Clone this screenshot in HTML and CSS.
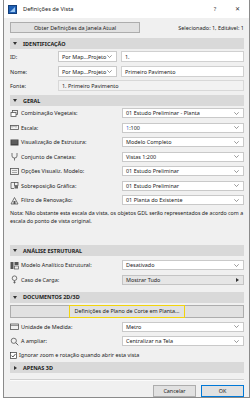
FILE: index.html
```html
<!DOCTYPE html>
<html lang="pt">
<head>
<meta charset="utf-8">
<link rel="stylesheet" href="styles.css">
</head>
<body>
<div class="window">
  <div class="titlebar">
    <svg class="appicon" width="9" height="9" viewBox="0 0 9 9"><rect x="0.5" y="0.5" width="8" height="8" fill="#1e5fb4" stroke="#123e7a"/><path d="M2 7 L7 2 L7 7 Z" fill="#9cc8f2"/></svg>
    <span class="title">Definições de Vista</span>
    <span class="tb-btn">?</span>
    <span class="tb-btn close">✕</span>
  </div>
  <div class="content">
    <div class="toprow">
      <div class="btn getbtn">Obter Definições da Janela Atual</div>
      <span class="selinfo">Selecionado: 1, Editável: 1</span>
    </div>

    <div class="section s-ident"><svg class="tri" width="4" height="3" viewBox="0 0 4 3"><path d="M0 0H4L2 3Z" fill="#333"/></svg>IDENTIFICAÇÃO</div>
    <div class="irow r-id">
      <span class="ilbl">ID:</span>
      <span class="sel small">Por Map...Projeto<svg class="chev" width="5" height="3" viewBox="0 0 5 3"><path d="M0.3 0.3L2.5 2.5L4.7 0.3" fill="none" stroke="#555" stroke-width="0.6"/></svg></span>
      <span class="field">1.</span>
    </div>
    <div class="irow r-nome">
      <span class="ilbl">Nome:</span>
      <span class="sel small">Por Map...Projeto<svg class="chev" width="5" height="3" viewBox="0 0 5 3"><path d="M0.3 0.3L2.5 2.5L4.7 0.3" fill="none" stroke="#555" stroke-width="0.6"/></svg></span>
      <span class="field">Primeiro Pavimento</span>
    </div>
    <div class="irow r-fonte">
      <span class="ilbl">Fonte:</span>
      <span class="field ro">1. Primeiro Pavimento</span>
    </div>

    <div class="section s-geral"><svg class="tri" width="4" height="3" viewBox="0 0 4 3"><path d="M0 0H4L2 3Z" fill="#333"/></svg>GERAL</div>
    <div class="grow first">
      <svg class="ico" viewBox="0 0 9 9"><rect x="2.5" y="1.5" width="5" height="4" fill="none" stroke="#555" stroke-width="0.8"/><rect x="1" y="3.5" width="5" height="4" fill="#fff" stroke="#555" stroke-width="0.8"/></svg>
      <span class="glbl">Combinação Vegetais:</span>
      <span class="sel wide">01 Estudo Preliminar - Planta<svg class="chev" width="5" height="3" viewBox="0 0 5 3"><path d="M0.3 0.3L2.5 2.5L4.7 0.3" fill="none" stroke="#555" stroke-width="0.6"/></svg></span>
    </div>
    <div class="grow">
      <svg class="ico" viewBox="0 0 9 9"><rect x="0.5" y="2.5" width="8" height="4" fill="none" stroke="#555" stroke-width="0.8"/><path d="M2 2.5V4.5M4 2.5V4M6 2.5V4.5" stroke="#555" stroke-width="0.6"/></svg>
      <span class="glbl">Escala:</span>
      <span class="sel wide"><span class="blue">1</span>:100<svg class="chev" width="5" height="3" viewBox="0 0 5 3"><path d="M0.3 0.3L2.5 2.5L4.7 0.3" fill="none" stroke="#555" stroke-width="0.6"/></svg></span>
    </div>
    <div class="grow">
      <svg class="ico" viewBox="0 0 9 9"><rect x="0.5" y="1.5" width="8" height="6" fill="#444"/><path d="M1.5 3H7.5M1.5 5H7.5" stroke="#999" stroke-width="0.6"/></svg>
      <span class="glbl">Visualização de Estrutura:</span>
      <span class="sel wide">Modelo Completo<svg class="chev" width="5" height="3" viewBox="0 0 5 3"><path d="M0.3 0.3L2.5 2.5L4.7 0.3" fill="none" stroke="#555" stroke-width="0.6"/></svg></span>
    </div>
    <div class="grow">
      <svg class="ico" viewBox="0 0 9 9"><path d="M2 1V4Q2 6 4.5 6Q7 6 7 4V1M4.5 6V8.5" fill="none" stroke="#555" stroke-width="0.8"/></svg>
      <span class="glbl">Conjunto de Canetas:</span>
      <span class="sel wide">Vistas 1:200<svg class="chev" width="5" height="3" viewBox="0 0 5 3"><path d="M0.3 0.3L2.5 2.5L4.7 0.3" fill="none" stroke="#555" stroke-width="0.6"/></svg></span>
    </div>
    <div class="grow">
      <svg class="ico" viewBox="0 0 9 9"><rect x="0.5" y="1.5" width="8" height="6" fill="none" stroke="#555" stroke-width="0.8"/><path d="M2 3.5H7M2 5.5H7" stroke="#777" stroke-width="0.6"/></svg>
      <span class="glbl">Opções Visualiz. Modelo:</span>
      <span class="sel wide">01 Estudo Preliminar<svg class="chev" width="5" height="3" viewBox="0 0 5 3"><path d="M0.3 0.3L2.5 2.5L4.7 0.3" fill="none" stroke="#555" stroke-width="0.6"/></svg></span>
    </div>
    <div class="grow">
      <svg class="ico" viewBox="0 0 9 9"><path d="M4 1.5H1V7.5H4" fill="none" stroke="#555" stroke-width="0.8"/><rect x="4.5" y="1.5" width="3.5" height="3" fill="none" stroke="#555" stroke-width="0.8"/><rect x="4.5" y="5" width="3.5" height="2.5" fill="#666"/></svg>
      <span class="glbl">Sobreposição Gráfica:</span>
      <span class="sel wide">01 Estudo Preliminar<svg class="chev" width="5" height="3" viewBox="0 0 5 3"><path d="M0.3 0.3L2.5 2.5L4.7 0.3" fill="none" stroke="#555" stroke-width="0.6"/></svg></span>
    </div>
    <div class="grow">
      <svg class="ico" viewBox="0 0 9 9"><path d="M1 8L4.5 1.5L8 8Z" fill="none" stroke="#555" stroke-width="0.8"/><rect x="3.5" y="5" width="2" height="3" fill="#555"/></svg>
      <span class="glbl">Filtro de Renovação:</span>
      <span class="sel wide">01 Planta do Existente<svg class="chev" width="5" height="3" viewBox="0 0 5 3"><path d="M0.3 0.3L2.5 2.5L4.7 0.3" fill="none" stroke="#555" stroke-width="0.6"/></svg></span>
    </div>
    <p class="note">Nota: Não obstante esta escala da vista, os objetos GDL serão representados de acordo com a escala do ponto de vista original.</p>

    <div class="section s-anal"><svg class="tri" width="4" height="3" viewBox="0 0 4 3"><path d="M0 0H4L2 3Z" fill="#333"/></svg>ANÁLISE ESTRUTURAL</div>
    <div class="grow first2">
      <svg class="ico" viewBox="0 0 9 9"><rect x="0.5" y="1" width="3" height="7" fill="#555"/><rect x="4.5" y="1" width="4" height="3" fill="#555"/><rect x="4.5" y="5" width="4" height="3" fill="none" stroke="#555" stroke-width="0.7"/></svg>
      <span class="glbl">Modelo Analítico Estrutural:</span>
      <span class="sel wide">Desativado<svg class="chev" width="5" height="3" viewBox="0 0 5 3"><path d="M0.3 0.3L2.5 2.5L4.7 0.3" fill="none" stroke="#555" stroke-width="0.6"/></svg></span>
    </div>
    <div class="grow">
      <svg class="ico" viewBox="0 0 9 9"><circle cx="4.5" cy="3.2" r="2.3" fill="none" stroke="#555" stroke-width="0.8"/><path d="M4.5 5.5V8.5M3.3 7.3H5.7" stroke="#555" stroke-width="0.8"/></svg>
      <span class="glbl">Caso de Carga:</span>
      <span class="sel wide gray">Mostrar Tudo<svg class="arr" width="3" height="4" viewBox="0 0 3 4"><path d="M0 0L3 2L0 4Z" fill="#333"/></svg></span>
    </div>

    <div class="section s-doc"><svg class="tri" width="4" height="3" viewBox="0 0 4 3"><path d="M0 0H4L2 3Z" fill="#333"/></svg>DOCUMENTOS 2D/3D</div>
    <div class="btn cutbtn"><span class="hl">Definições de Plano de Corte em Planta...</span></div>
    <div class="grow first3">
      <svg class="ico" viewBox="0 0 9 9"><rect x="0.5" y="2" width="8" height="5.5" fill="none" stroke="#555" stroke-width="0.8"/><path d="M0.5 3.5H8.5" stroke="#555" stroke-width="0.6"/></svg>
      <span class="glbl">Unidade de Medida:</span>
      <span class="sel wide">Metro<svg class="chev" width="5" height="3" viewBox="0 0 5 3"><path d="M0.3 0.3L2.5 2.5L4.7 0.3" fill="none" stroke="#555" stroke-width="0.6"/></svg></span>
    </div>
    <div class="grow">
      <svg class="ico" viewBox="0 0 9 9"><circle cx="3.8" cy="3.8" r="2.6" fill="none" stroke="#555" stroke-width="0.8"/><path d="M5.7 5.7L8.3 8.3" stroke="#555" stroke-width="0.9"/></svg>
      <span class="glbl">A ampliar:</span>
      <span class="sel wide">Centralizar na Tela<svg class="chev" width="5" height="3" viewBox="0 0 5 3"><path d="M0.3 0.3L2.5 2.5L4.7 0.3" fill="none" stroke="#555" stroke-width="0.6"/></svg></span>
    </div>
    <div class="checkrow">
      <svg class="cb" width="7" height="7" viewBox="0 0 7 7"><rect x="0.5" y="0.5" width="6" height="6" fill="#fff" stroke="#333" stroke-width="0.7"/><path d="M1.5 3.6L2.9 5L5.5 2" fill="none" stroke="#222" stroke-width="0.8"/></svg>
      <span>Ignorar zoom e rotação quando abrir esta vista</span>
    </div>
    <div class="section s-3d"><svg class="tri" width="3" height="4" viewBox="0 0 3 4"><path d="M0 0L3 2L0 4Z" fill="#333"/></svg>APENAS 3D</div>
    <div class="sep"></div>
    <div class="footer">
      <div class="btn fbtn">Cancelar</div>
      <div class="btn fbtn ok">OK</div>
    </div>
  </div>
</div>
</body>
</html>
```
FILE: styles.css
```css
* { box-sizing: border-box; }
html, body { margin: 0; padding: 0; background: #ffffff; }
body {
  font-family: "Noto Sans", "Open Sans", sans-serif;
  font-size: 5.45px;
  color: #222;
  width: 252px;
  height: 400px;
  overflow: hidden;
}
.window {
  margin-left: 3px;
  width: 247px;
  height: 398px;
  border: 1px solid #8a8a8a;
  border-top: 0;
  background: #f0f0f0;
  display: flex;
  flex-direction: column;
}
.titlebar {
  height: 18px;
  flex: none;
  background: #fff;
  display: flex;
  align-items: center;
  padding-left: 4px;
  font-size: 5.7px;
  color: #222;
}
.appicon { flex: none; }
.title { margin-left: 6px; flex: 1; }
.tb-btn { width: 22px; text-align: center; color: #333; font-size: 5.7px; }
.tb-btn.close { font-size: 6px; width: 22px; margin-right: 1px; }
.content { padding: 4px 5px 0 6px; display: flex; flex-direction: column; }
.btn {
  background: #e1e1e1;
  border: 1px solid #adadad;
  display: flex;
  align-items: center;
  justify-content: center;
  color: #222;
}
.toprow { height: 11px; display: flex; align-items: center; justify-content: space-between; }
.getbtn { width: 130px; height: 11px; }
.selinfo { color: #222; }
.section {
  height: 11px;
  background: #d9d9d9;
  display: flex;
  align-items: center;
  font-weight: bold;
  padding-left: 3px;
  color: #222;
}
.tri { margin-right: 6px; flex: none; }
.s-ident { margin-top: 5px; }
.irow { display: flex; align-items: center; height: 11px; }
.r-id { margin-top: 2px; }
.r-nome { margin-top: 4px; }
.r-fonte { margin-top: 3px; }
.ilbl { width: 48px; flex: none; }
.sel {
  height: 100%;
  background: #fff;
  border: 1px solid #c9c9c9;
  display: flex;
  align-items: center;
  padding-left: 3px;
  padding-right: 4px;
  white-space: nowrap;
}
.sel .chev, .sel .arr { margin-left: auto; flex: none; }
.sel.small { width: 59px; }
.sel.wide { width: 122px; margin-left: auto; height: 10px; }
.sel.gray { background: #e6e6e6; border-color: #c4c4c4; }
.field {
  flex: 1;
  height: 100%;
  margin-left: 4px;
  background: #fff;
  border: 1px solid #d0d0d0;
  display: flex;
  align-items: center;
  padding-left: 3px;
}
.field.ro { margin-left: 0; background: #f2f2f2; border-color: #d8d8d8; }
.s-geral { margin-top: 4px; }
.grow { display: flex; align-items: center; height: 10px; margin-top: 4.5px; }
.grow.first { margin-top: 2px; }
.ico { width: 9px; height: 9px; flex: none; margin-right: 2px; }
.glbl { white-space: nowrap; }
.blue { color: #2a62c9; }
.note { margin: 4px 0 0 0; line-height: 8px; font-size: 5.3px; }
.s-anal { margin-top: 20px; }
.grow.first2 { margin-top: 4px; }
.s-doc { margin-top: 7px; }
.cutbtn { height: 13px; margin-top: 2px; align-items: stretch; }
.hl {
  border: 1.5px solid #f2d40c;
  display: flex;
  align-items: center;
  padding: 0 5px;
  margin: -1px 0;
}
.grow.first3 { margin-top: 4px; }
.checkrow { display: flex; align-items: center; height: 8px; margin-top: 5px; }
.cb { margin-right: 2px; flex: none; }
.s-3d { margin-top: 3px; }
.s-3d .tri { margin-left: 1px; margin-right: 6px; }
.sep { height: 2px; border-top: 1px solid #d0d0d0; border-bottom: 1px solid #fbfbfb; margin-top: 6px; }
.footer { display: flex; justify-content: flex-end; gap: 5px; margin-top: 4px; }
.fbtn { width: 43px; height: 12px; }
.fbtn.ok { border-color: #0078d7; }
```
